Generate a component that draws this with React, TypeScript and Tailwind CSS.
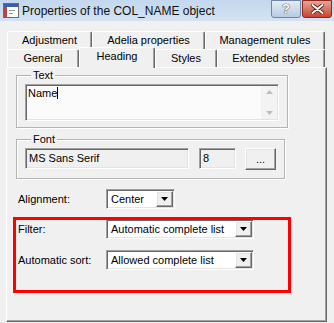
import React from "react";

const sunken =
  "border border-t-[#a0a0a0] border-l-[#a0a0a0] border-b-white border-r-white shadow-[inset_1px_1px_0_#696969,inset_-1px_-1px_0_#e3e3e3]";
const raised =
  "border border-t-white border-l-white border-b-[#696969] border-r-[#696969] shadow-[inset_-1px_-1px_0_#a0a0a0,inset_1px_1px_0_#e3e3e3]";

function Tab({ label, w, active }: { label: string; w: string; active?: boolean }) {
  return (
    <div
      className={`${w} ${
        active ? "h-[21px] -mb-[1px] relative z-10 bg-[#f0f0f0] pb-[3px]" : "h-[18px]"
      } flex items-center justify-center rounded-t-[2px] border-t border-l border-r border-t-white border-l-white border-r-[#696969] shadow-[inset_-1px_0_0_#a0a0a0]`}
    >
      {label}
    </div>
  );
}

function Combo({ value, w }: { value: string; w: string }) {
  return (
    <div className={`${w} h-[20px] bg-white flex items-center ${sunken}`}>
      <span className="flex-1 pl-[4px] leading-none">{value}</span>
      <div className={`w-[17px] h-[16px] mr-[1px] bg-[#f0f0f0] flex items-center justify-center ${raised}`}>
        <svg width="7" height="4" viewBox="0 0 7 4">
          <path d="M0 0h7L3.5 4z" fill="#000" />
        </svg>
      </div>
    </div>
  );
}

function TitleBar() {
  return (
    <div className="h-[21px] flex items-center bg-gradient-to-b from-[#c3d7ee] to-[#d4e3f4] font-['Liberation_Sans',Arial,sans-serif]">
      <svg width="16" height="15" viewBox="0 0 16 15" className="ml-[3px]">
        <rect x="0.5" y="0.5" width="15" height="14" fill="#fff" stroke="#6b6b6b" />
        <rect x="1" y="1" width="14" height="3" fill="#3a5fb0" />
        <rect x="1" y="4" width="3" height="10" fill="#c04040" />
        <rect x="6" y="7" width="6" height="1" fill="#999" />
        <rect x="6" y="10" width="4" height="1" fill="#999" />
      </svg>
      <span className="ml-[3px] text-[12px] text-[#111]">Properties of the COL_NAME object</span>
      <div className="ml-auto flex self-start">
        <div className="w-[30px] h-[18px] rounded-b-[3px] border border-[#6d86a8] bg-gradient-to-b from-[#e3ecf7] to-[#b8cbe3] flex items-center justify-center text-white text-[13px] font-bold [text-shadow:0_0_1px_#333,0_0_1px_#333]">
          ?
        </div>
        <div className="w-[30px] h-[18px] ml-[1px] mr-[2px] rounded-b-[3px] border border-[#8a2a1e] bg-gradient-to-b from-[#e8a396] to-[#c5432f] flex items-center justify-center">
          <svg width="13" height="10" viewBox="0 0 13 10">
            <path d="M1.5 1l10 8M11.5 1l-10 8" stroke="#4a1a14" strokeWidth="3.6" strokeLinecap="round" />
            <path d="M1.5 1l10 8M11.5 1l-10 8" stroke="#fff" strokeWidth="2" strokeLinecap="round" />
          </svg>
        </div>
      </div>
    </div>
  );
}

export default function App() {
  return (
    <div className="relative w-[334px] h-[323px] overflow-hidden bg-[#f0f0f0] font-['Liberation_Sans',Arial,sans-serif] text-[11px] text-black">
      <TitleBar />
      <div className="pl-[6px] pt-[10px]">
        <div className="pl-[1px] flex h-[18px]">
          <Tab label="Adjustment" w="w-[85px]" />
          <Tab label="Adelia properties" w="w-[113px]" />
          <Tab label="Management rules" w="w-[120px]" />
        </div>
        <div className="pl-[1px] flex items-end h-[18px]">
          <Tab label="General" w="w-[72px]" />
          <Tab label="Heading" w="w-[76px]" active />
          <Tab label="Styles" w="w-[62px]" />
          <Tab label="Extended styles" w="w-[108px]" />
        </div>
        <div className="w-[321px] h-[255px] border border-t-white border-l-white border-b-[#696969] border-r-[#696969] shadow-[inset_-1px_-1px_0_#a0a0a0] pl-[9px] pt-[1px]">
          <fieldset className="w-[269px] border border-[#b4b4b4] shadow-[1px_1px_0_white,inset_1px_1px_0_white] px-[8px] pb-[6px]">
            <legend className="ml-[6px] px-[2px] leading-[13px]">Text</legend>
            <div className={`mt-[2px] w-[254px] h-[37px] bg-[#fbfbfb] flex ${sunken}`}>
              <div className="flex-1 pl-[2px] pt-[2px] leading-[13px]">
                Name<span className="inline-block w-px h-[12px] bg-black align-[-2px]" />
              </div>
              <div className="w-[16px] my-[1px] mr-[1px] bg-[#f3f3f3] flex flex-col items-center justify-between py-[4px]">
                <svg width="7" height="4" viewBox="0 0 7 4">
                  <path d="M0 4h7L3.5 0z" fill="#bdbdbd" />
                </svg>
                <svg width="7" height="4" viewBox="0 0 7 4">
                  <path d="M0 0h7L3.5 4z" fill="#bdbdbd" />
                </svg>
              </div>
            </div>
          </fieldset>
          <fieldset className="mt-[5px] w-[269px] border border-[#b4b4b4] shadow-[1px_1px_0_white,inset_1px_1px_0_white] px-[8px] pb-[8px]">
            <legend className="ml-[6px] px-[2px] leading-[13px]">Font</legend>
            <div className="mt-[2px] flex items-start">
              <div className={`w-[164px] h-[21px] flex items-center pl-[3px] ${sunken}`}>MS Sans Serif</div>
              <div className={`ml-[10px] w-[37px] h-[21px] flex items-center pl-[3px] ${sunken}`}>8</div>
              <div className={`ml-[9px] w-[31px] h-[22px] flex items-center justify-center ${raised}`}>...</div>
            </div>
          </fieldset>
          <div className="mt-[10px] flex items-center">
            <span className="w-[90px] pl-[2px]">Alignment:</span>
            <Combo value="Center" w="w-[69px]" />
          </div>
          <div className="mt-[10px] flex items-center">
            <span className="w-[90px] pl-[2px]">Filter:</span>
            <Combo value="Automatic complete list" w="w-[148px]" />
          </div>
          <div className="mt-[11px] flex items-center">
            <span className="w-[90px] pl-[2px]">Automatic sort:</span>
            <Combo value="Allowed complete list" w="w-[148px]" />
          </div>
        </div>
      </div>
      <div className="absolute left-[13px] top-[217px] w-[278px] h-[76px] border-[3px] border-[#ff0000]" />
    </div>
  );
}
